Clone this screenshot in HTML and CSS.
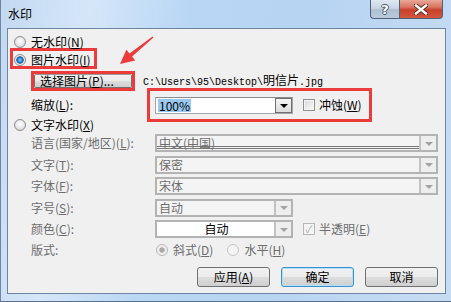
FILE: index.html
```html
<!DOCTYPE html>
<html lang="zh-CN">
<head>
<meta charset="utf-8">
<link rel="stylesheet" href="styles.css">
</head>
<body>
<div class="window">
  <div class="titlebar">
    <span class="title">水印</span>
    <div class="caption">
      <div class="cap help">?</div>
      <div class="cap close">
        <svg width="14" height="11" viewBox="0 0 14 11">
          <path d="M2 1.5 L12 9.5 M12 1.5 L2 9.5" stroke="#5a2418" stroke-width="4.2" stroke-linecap="square"/>
          <path d="M2 1.5 L12 9.5 M12 1.5 L2 9.5" stroke="#ffffff" stroke-width="2.4" stroke-linecap="square"/>
        </svg>
      </div>
    </div>
  </div>
  <div class="client">
    <div class="row opt first"><span class="radio"></span><span>无水印(<u>N</u>)</span></div>
    <div class="mark mark-pic"><span class="radio on"></span><span>图片水印(<u>I</u>)</span></div>
    <div class="row pickrow">
      <div class="mark mark-btn"><button class="btn pick">选择图片(<u>P</u>)...</button></div>
      <span class="path">C:\Users\95\Desktop\<span class="cjk">明信片</span>.jpg</span>
    </div>
    <div class="row scalerow">
      <span class="lbl">缩放(<u>L</u>):</span>
      <div class="mark mark-scale">
        <div class="combo edit"><span class="field"><span class="sel">100%</span></span><span class="dd"><i class="tri"></i></span></div>
        <span class="check"></span><span class="ctext">冲蚀(<u>W</u>)</span>
      </div>
    </div>
    <div class="row opt textopt"><span class="radio"></span><span>文字水印(<u>X</u>)</span></div>
    <div class="grid">
      <span class="dlbl">语言(国家/地区)(<u>L</u>):</span>
      <div class="combo dis lang"><span class="field">中文(中国)</span><span class="dd"><i class="tri"></i></span></div>
      <span class="dlbl">文字(<u>T</u>):</span>
      <div class="combo dis"><span class="field">保密</span><span class="dd"><i class="tri"></i></span></div>
      <span class="dlbl">字体(<u>F</u>):</span>
      <div class="combo dis"><span class="field">宋体</span><span class="dd"><i class="tri"></i></span></div>
      <span class="dlbl">字号(<u>S</u>):</span>
      <div class="combo dis short"><span class="field">自动</span><span class="dd"><i class="tri"></i></span></div>
      <span class="dlbl">颜色(<u>C</u>):</span>
      <div class="colorrow">
        <div class="combo dis short white"><span class="field center">自动</span><span class="dd"><i class="tri"></i></span></div>
        <span class="check dischk">✓</span><span class="dtext">半透明(<u>E</u>)</span>
      </div>
      <span class="dlbl">版式:</span>
      <div class="layoutrow">
        <span class="radio dison"></span><span class="dtext">斜式(<u>D</u>)</span>
        <span class="radio disoff"></span><span class="dtext">水平(<u>H</u>)</span>
      </div>
    </div>
    <div class="buttons">
      <button class="btn">应用(<u>A</u>)</button>
      <button class="btn default">确定</button>
      <button class="btn">取消</button>
    </div>
  </div>
  <svg class="arrow" width="451" height="302" viewBox="0 0 451 302">
    <polygon points="119,64 125.4,49.7 128.5,53.6 151.5,36.4 152.5,37.6 131.1,56.6 134.2,60.5" fill="#ec3b3b"/>
  </svg>
</div>
</body>
</html>
```
FILE: styles.css
```css
html, body {
  margin: 0;
  padding: 0;
  background: #ffffff;
}
body {
  font-family: "Noto Sans CJK SC", "Noto Sans", sans-serif;
  font-size: 12px;
  color: #000;
}
.window {
  position: relative;
  width: 451px;
  height: 302px;
  overflow: hidden;
  box-sizing: border-box;
  background: linear-gradient(100deg, #c3d9f1 0%, #d5e6f8 18%, #b9d6f5 38%, #b7d4f3 62%, #c6dcf3 100%);
  border-left: 1px solid #6c86a3;
  border-bottom: 1px solid #56708d;
}
.titlebar {
  height: 28px;
  display: flex;
  justify-content: space-between;
  align-items: flex-start;
}
.title {
  padding-left: 7px;
  line-height: 28px;
  font-size: 12px;
}
.caption {
  display: flex;
  margin-right: 8px;
}
.cap {
  height: 19px;
  box-sizing: border-box;
  display: flex;
  align-items: center;
  justify-content: center;
  border: 1px solid #50627a;
  border-top: none;
}
.help {
  width: 29px;
  border-radius: 0 0 0 4px;
  border-right: none;
  background: linear-gradient(#dfe8f2 0%, #c9d6e4 45%, #aebfd2 55%, #b9cadc 100%);
  color: #fff;
  font-family: "DejaVu Sans", sans-serif;
  font-weight: bold;
  font-size: 13px;
  text-shadow: 1px 0 0 #4c5a6c, -1px 0 0 #4c5a6c, 0 1px 0 #4c5a6c, 0 -1px 0 #4c5a6c;
}
.close {
  width: 44px;
  border-radius: 0 0 4px 0;
  background: linear-gradient(#e8a898 0%, #d9735f 40%, #c7412a 55%, #d3573c 100%);
}
.client {
  margin-left: 6px;
  width: 439px;
  height: 266px;
  box-sizing: border-box;
  border: 1px solid #6d85a0;
  background: #f0f0f0;
}
.row {
  display: flex;
  align-items: center;
}
.opt {
  height: 12px;
  padding-left: 6px;
  gap: 5px;
  line-height: 12px;
}
.first {
  margin-top: 7px;
}
.mark {
  box-sizing: border-box;
  border: 3px solid #ec3b3b;
}
.mark-pic {
  margin-left: 2px;
  width: 87px;
  height: 21px;
  display: flex;
  align-items: center;
  padding: 3px 0 0 1px;
  gap: 5px;
  line-height: 12px;
}
.pickrow {
  margin-top: 2px;
  margin-left: 23px;
  height: 20px;
  gap: 8px;
}
.mark-btn {
  width: 104px;
  height: 20px;
  display: flex;
}
.btn {
  box-sizing: border-box;
  width: 73px;
  height: 20px;
  padding: 0;
  border: 1px solid #707070;
  border-radius: 3px;
  background: linear-gradient(#f2f2f2 0%, #ebebeb 48%, #dddddd 52%, #cfcfcf 100%);
  font-family: "Noto Sans CJK SC", sans-serif;
  font-size: 12px;
  line-height: 16px;
  color: #000;
}
.btn.pick {
  width: 98px;
  height: 14px;
  line-height: 12px;
  border-radius: 2px;
  border-top-color: #9a9a9a;
  text-align: left;
  padding-left: 5px;
}
.path {
  font-family: "Liberation Mono", monospace;
  font-size: 10px;
  line-height: 12px;
  padding-top: 1px;
}
.cjk {
  font-family: "Noto Sans CJK SC", sans-serif;
  font-size: 12px;
}
.scalerow {
  margin-top: -3px;
  margin-left: 23px;
  height: 34px;
}
.lbl {
  width: 116px;
  line-height: 12px;
}
.mark-scale {
  width: 225px;
  height: 34px;
  display: flex;
  align-items: center;
  padding-left: 5px;
}
.combo {
  display: flex;
  box-sizing: border-box;
  height: 18px;
  width: 283px;
}
.combo.edit {
  width: 138px;
  height: 17px;
  border: 1px solid #a6a6a6;
  border-top-color: #8c8c8c;
  background: #fff;
  margin-right: 10px;
}
.field {
  flex: 1;
  display: flex;
  align-items: center;
  padding-left: 2px;
  line-height: 12px;
  position: relative;
}
.sel {
  background: #99c9f0;
  padding: 0 1px;
  line-height: 13px;
}
.edit .dd {
  width: 17px;
  box-sizing: border-box;
  border: 1px solid #707070;
  background: linear-gradient(#f4f4f4, #dcdcdc);
  display: flex;
  align-items: center;
  justify-content: center;
}
.tri {
  width: 0;
  height: 0;
  border-left: 4px solid transparent;
  border-right: 4px solid transparent;
  border-top: 4px solid #000;
  margin-top: 1px;
}
.check {
  box-sizing: border-box;
  width: 12px;
  height: 12px;
  border: 1px solid #8f8f8f;
  background: linear-gradient(135deg, #d9d9d9, #fafafa);
  box-shadow: inset 0 0 0 1px #f4f4f4;
  margin-right: 4px;
}
.ctext {
  line-height: 12px;
}
.textopt {
  margin-top: -3px;
}
.radio {
  box-sizing: border-box;
  width: 12px;
  height: 12px;
  border-radius: 50%;
  border: 1px solid #8b8b8b;
  background: radial-gradient(circle at 50% 40%, #ffffff 0%, #e6e6e6 55%, #cfcfcf 100%);
  flex: none;
}
.radio.on {
  background: radial-gradient(circle, #86d0ff 0%, #2a8ad4 30%, #1b4f86 48%, #e8e8e8 56%, #f5f5f5 100%);
}
.radio.dison {
  border-color: #b5b5b5;
  background: radial-gradient(circle, #a9a9a9 0%, #a9a9a9 32%, #efefef 44%, #f6f6f6 100%);
}
.radio.disoff {
  border-color: #c6c6c6;
  background: #f4f4f4;
}
.grid {
  display: grid;
  grid-template-columns: 124px 283px;
  grid-template-rows: repeat(5, 18px) 16px;
  row-gap: 3.5px;
  margin: 3px 0 0 23px;
  align-items: center;
}
.dlbl {
  color: #6d6d6d;
  line-height: 12px;
}
.combo.dis {
  border: 2px solid #b3b3b3;
  background: #f4f4f4;
  color: #6d6d6d;
}
.combo.short {
  width: 138px;
}
.combo.white {
  background: #ffffff;
  color: #000;
}
.dis .dd {
  width: 15px;
  border-left: 2px solid #c3c3c3;
  background: #eeeeee;
  display: flex;
  align-items: center;
  justify-content: center;
}
.dis .tri {
  border-top-color: #a3a3a3;
  border-left-width: 4px;
  border-right-width: 4px;
}
.field.center {
  justify-content: center;
}
.lang .field::after {
  content: "";
  position: absolute;
  left: 0;
  right: 0;
  bottom: 1px;
  height: 3px;
  border-top: 1px solid #777;
  border-bottom: 1px solid #777;
  box-sizing: border-box;
}
.colorrow {
  display: flex;
  align-items: center;
}
.colorrow .combo {
  margin-right: 10px;
}
.dischk {
  border-color: #b6b6b6;
  background: #f4f4f4;
  box-shadow: none;
  color: #a9a9a9;
  font-size: 10px;
  line-height: 10px;
  text-align: center;
}
.dtext {
  color: #6d6d6d;
  line-height: 12px;
}
.layoutrow {
  display: flex;
  align-items: center;
  padding-left: 1px;
}
.layoutrow .radio {
  margin-right: 5px;
}
.layoutrow .dtext:nth-of-type(2) {
  margin-right: 14px;
}
.buttons {
  display: flex;
  justify-content: flex-end;
  gap: 11px;
  padding-right: 7px;
  margin-top: 9px;
}
.btn.default {
  border-color: #3c8fd0;
  box-shadow: inset 0 0 0 1px #aee2fa;
}
.arrow {
  position: absolute;
  left: 0;
  top: 0;
  pointer-events: none;
}
```
